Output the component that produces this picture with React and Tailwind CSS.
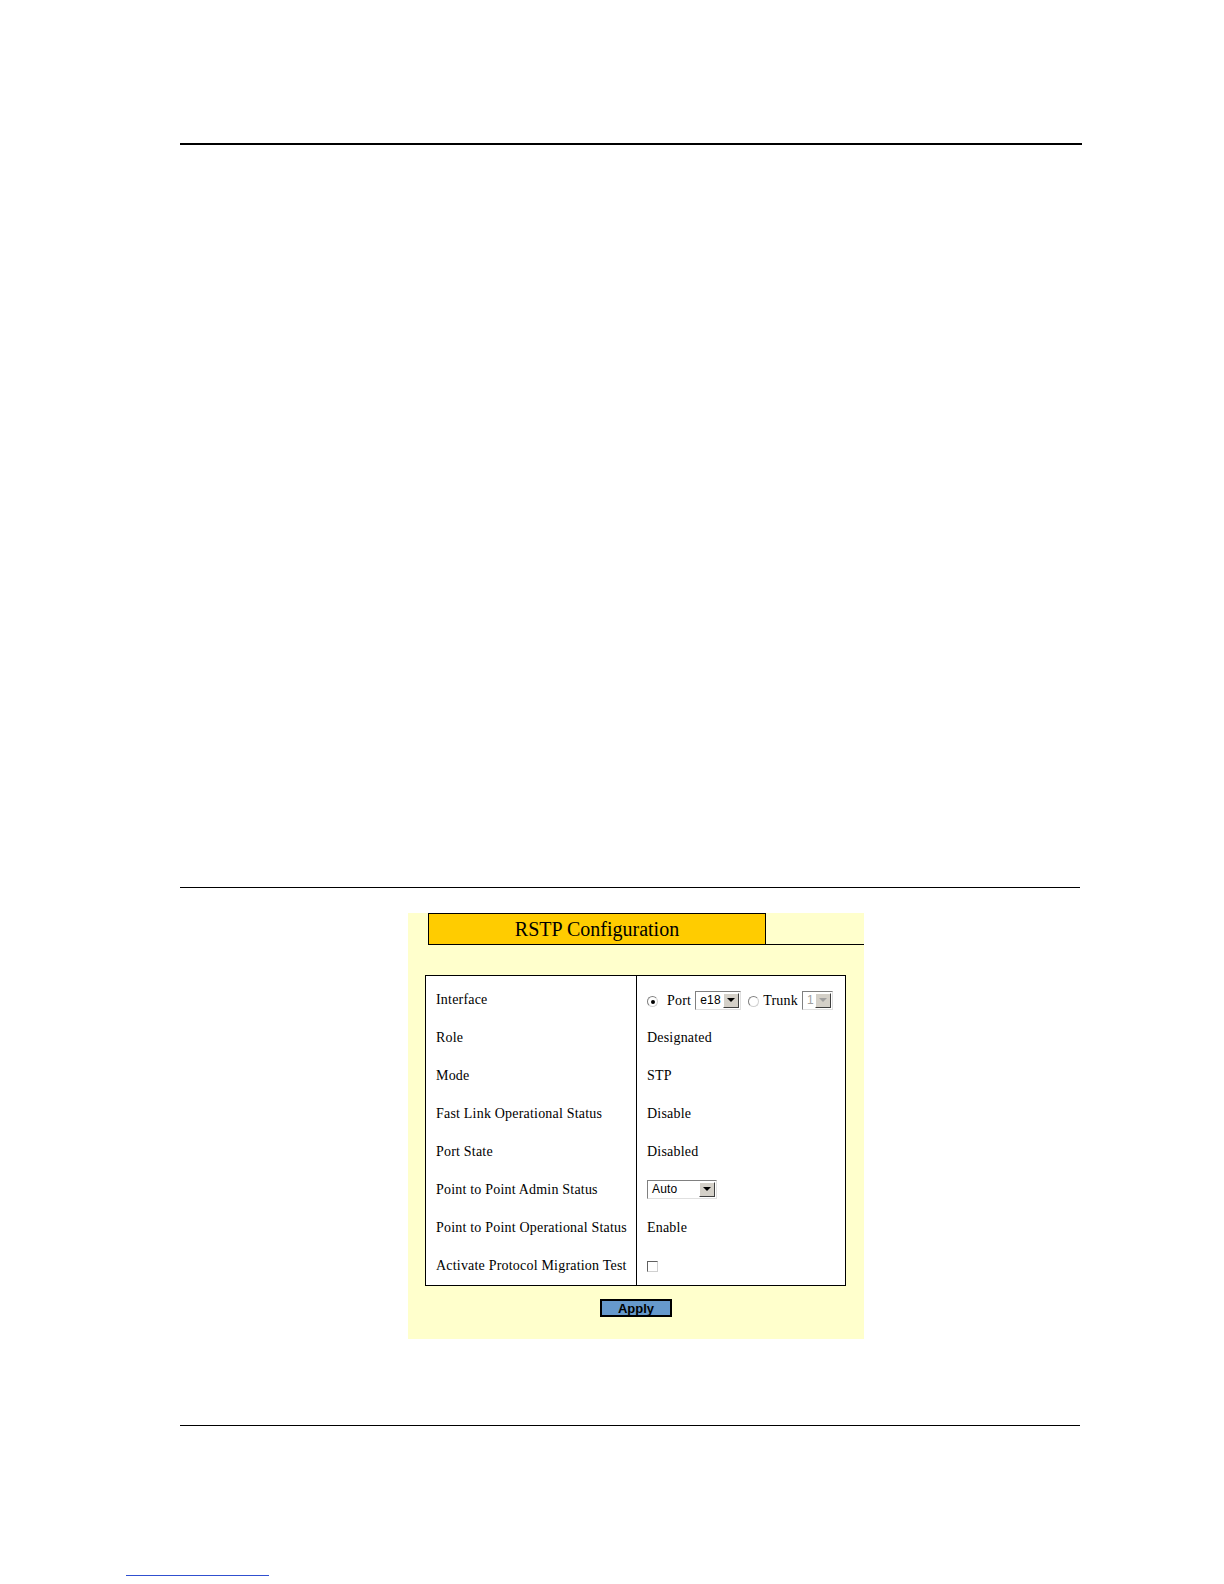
import React from 'react';

const serif = { fontFamily: '"Liberation Serif", "Times New Roman", serif' };

function Arrow({ disabled }) {
  return (
    <div className="w-[16px] h-full bg-[#d4d0c8] border-t border-l border-t-white border-l-white border-r border-b border-r-[#404040] border-b-[#404040] flex items-center justify-center">
      <div
        className={`w-0 h-0 border-l-[4px] border-r-[4px] border-t-[4px] border-l-transparent border-r-transparent ${disabled ? 'border-t-[#a0a0a0]' : 'border-t-black'}`}
      />
    </div>
  );
}

function Select({ value, width, disabled }) {
  return (
    <div
      className="h-[19px] flex bg-white border-t border-l border-t-[#808080] border-l-[#808080] border-r border-b border-r-[#e0e0e0] border-b-[#e0e0e0] p-[1px]"
      style={{ width }}
    >
      <div
        className={`flex-1 flex items-center pl-[3px] text-[12px] leading-none ${disabled ? 'text-[#a0a0a0]' : 'text-black'}`}
        style={{ fontFamily: '"Liberation Sans", Arial, sans-serif' }}
      >
        {value}
      </div>
      <Arrow disabled={disabled} />
    </div>
  );
}

function Radio({ checked }) {
  return (
    <div className="w-[11px] h-[11px] rounded-full bg-white border border-t-[#808080] border-l-[#808080] border-r-[#d0d0d0] border-b-[#d0d0d0] flex items-center justify-center mt-[3px]">
      {checked && <div className="w-[4px] h-[4px] rounded-full bg-black" />}
    </div>
  );
}

const rows = [
  ['Interface', 'interface'],
  ['Role', 'Designated'],
  ['Mode', 'STP'],
  ['Fast Link Operational Status', 'Disable'],
  ['Port State', 'Disabled'],
  ['Point to Point Admin Status', 'auto'],
  ['Point to Point Operational Status', 'Enable'],
  ['Activate Protocol Migration Test', 'check'],
];

function Value({ v }) {
  if (v === 'interface') {
    return (
      <div className="flex items-center mt-[2px]">
        <Radio checked />
        <span className="ml-[9px] mr-[4px]">Port</span>
        <Select value="e18" width={46} />
        <div className="ml-[7px]"><Radio /></div>
        <span className="ml-[4px] mr-[4px]">Trunk</span>
        <Select value="1" width={31} disabled />
      </div>
    );
  }
  if (v === 'auto') {
    return <Select value="Auto" width={70} />;
  }
  if (v === 'check') {
    return (
      <div className="w-[11px] h-[11px] bg-white border border-t-[#606060] border-l-[#606060] border-r-[#d0d0d0] border-b-[#d0d0d0] mt-[2px]" />
    );
  }
  return <span>{v}</span>;
}

export default function App() {
  return (
    <div className="w-[1224px] h-[1584px] bg-white overflow-hidden pt-[143px]">
      <div className="ml-[180px] w-[902px] h-[2px] bg-black" />
      <div className="ml-[180px] w-[900px] h-[1px] bg-black mt-[742px]" />

      <div className="ml-[408px] w-[456px] h-[426px] mt-[25px] bg-[#ffffcc]" style={serif}>
        <div className="flex">
          <div className="ml-[20px] w-[338px] h-[32px] bg-[#ffcc00] border border-black flex items-center justify-center text-[20px] text-black">
            RSTP Configuration
          </div>
          <div className="flex-1 border-b border-black" />
        </div>

        <div className="ml-[17px] mt-[30px] w-[421px] bg-white border border-black flex">
          <div className="w-[211px] border-r border-black pt-[4px] pb-[1px]">
            {rows.map(([label]) => (
              <div key={label} className="h-[38px] flex items-center pl-[10px] text-[14px] tracking-[0.2px] text-black whitespace-nowrap">
                {label}
              </div>
            ))}
          </div>
          <div className="flex-1 pt-[4px] pb-[1px]">
            {rows.map(([label, v]) => (
              <div key={label} className="h-[38px] flex items-center pl-[10px] text-[14px] tracking-[0.2px] text-black whitespace-nowrap">
                <Value v={v} />
              </div>
            ))}
          </div>
        </div>

        <div className="flex justify-center mt-[13px]">
          <div
            className="w-[72px] h-[18px] bg-[#6699cc] border-2 border-black flex items-center justify-center text-[13px] font-bold text-black leading-none"
            style={{ fontFamily: '"Liberation Sans", Arial, sans-serif' }}
          >
            Apply
          </div>
        </div>
      </div>

      <div className="ml-[180px] w-[900px] h-[1px] bg-black mt-[86px]" />
      <div className="ml-[126px] w-[143px] h-[1px] bg-[#3050d0] mt-[149px]" />
    </div>
  );
}
